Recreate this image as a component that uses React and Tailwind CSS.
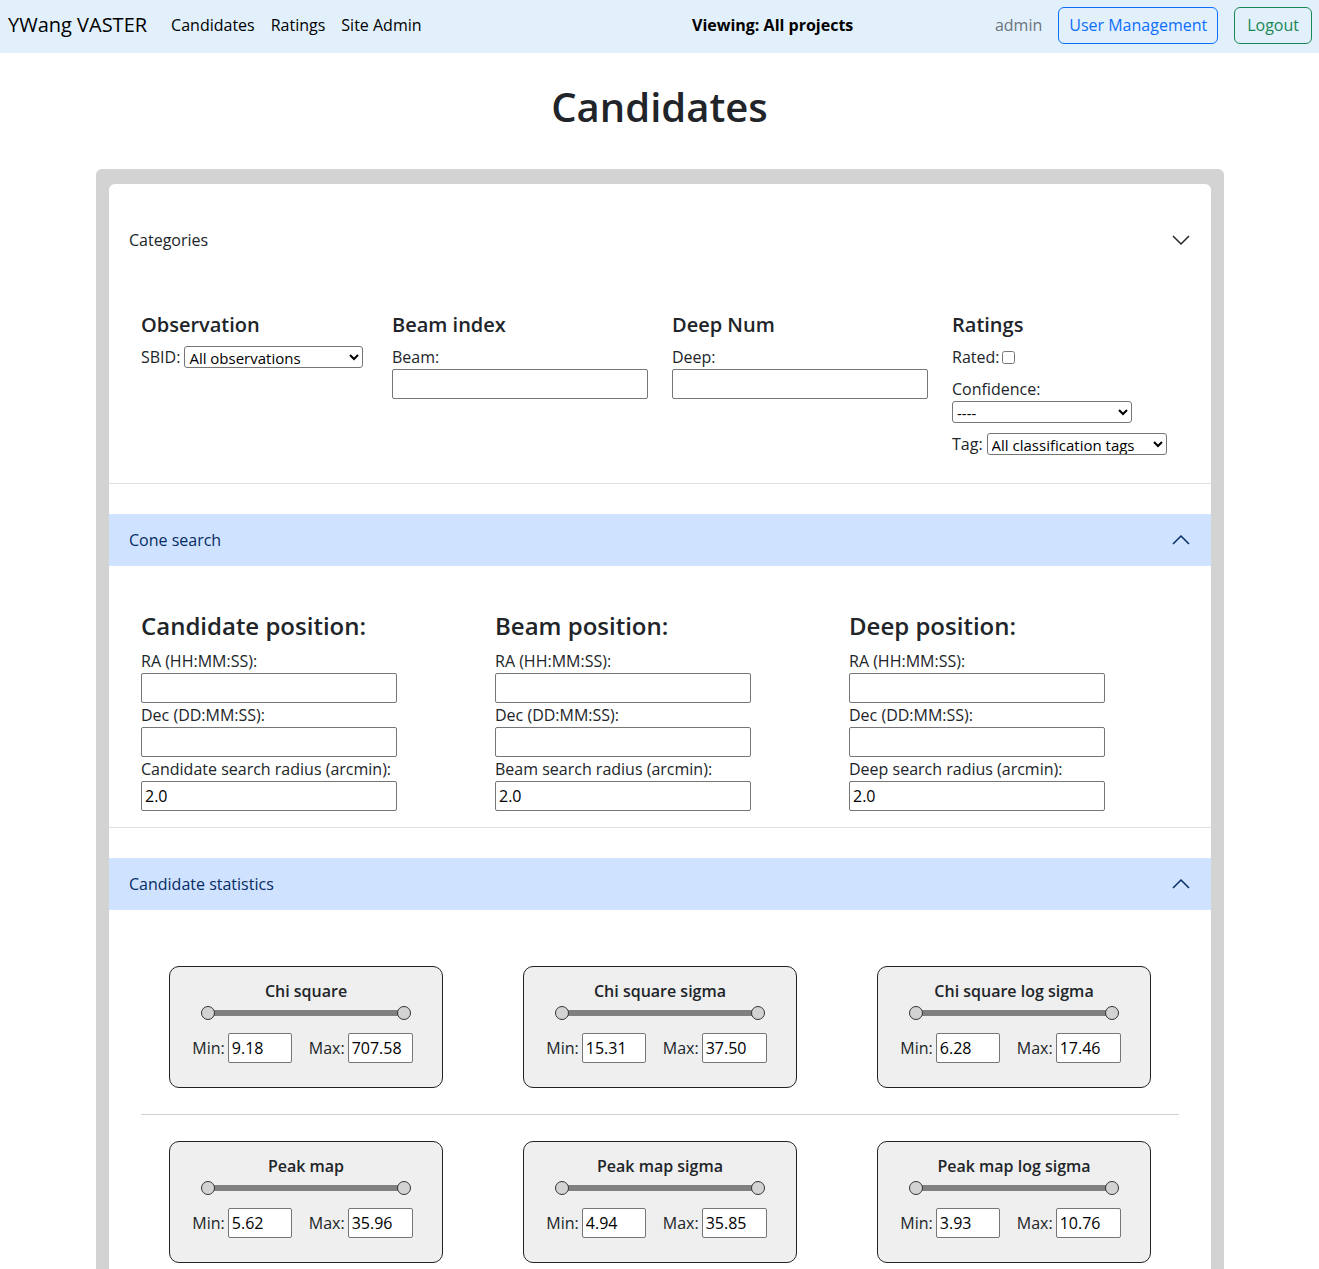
import React from 'react';

const font = { fontFamily: '"Open Sans", "Noto Sans", sans-serif' };

function Chevron({ up, className }) {
  return (
    <svg viewBox="0 0 20 20" className={className} fill="none" stroke="currentColor" strokeWidth="1.5">
      {up ? <polyline points="2,14 10,6 18,14" /> : <polyline points="2,6 10,14 18,6" />}
    </svg>
  );
}

function TextInput({ value = '', className = '' }) {
  return (
    <input
      type="text"
      defaultValue={value}
      className={`h-[30px] border border-[#767676] rounded-[2px] bg-white px-[3px] text-base text-black outline-none ${className}`}
    />
  );
}

function AccordionHeader({ title, open }) {
  return (
    <div
      className={`h-[52px] px-5 flex items-center justify-between ${
        open ? 'bg-[#cfe2ff] text-[#052c65]' : 'text-[#212529]'
      }`}
    >
      <span className="text-base">{title}</span>
      <Chevron up={open} className="w-5 h-5" />
    </div>
  );
}

function ConeColumn({ title, radiusLabel }) {
  return (
    <div className="px-3">
      <h3 className="text-2xl font-semibold leading-[29px] mb-[9px]">{title}</h3>
      <div className="leading-6">RA (HH:MM:SS):</div>
      <TextInput className="w-[256px] block" />
      <div className="leading-6">Dec (DD:MM:SS):</div>
      <TextInput className="w-[256px] block" />
      <div className="leading-6">{radiusLabel}</div>
      <TextInput value="2.0" className="w-[256px] block" />
    </div>
  );
}

function StatCard({ title, min, max }) {
  return (
    <div className="flex justify-center">
      <div className="w-[274px] h-[122px] bg-[#efefef] border border-[#222] rounded-[10px] pt-[12px] flex flex-col items-center">
        <div className="font-semibold leading-6 text-[#212529]">{title}</div>
        <div className="relative w-[210px] h-[14px] mt-[3px] flex items-center">
          <div className="absolute left-[7px] right-[7px] h-[6px] bg-[#808080]" />
          <div className="absolute left-0 w-[14px] h-[14px] rounded-full bg-[#d3d3d3] border border-[#333]" />
          <div className="absolute right-0 w-[14px] h-[14px] rounded-full bg-[#d3d3d3] border border-[#333]" />
        </div>
        <div className="flex items-center mt-[13px] ml-[-7px]">
          <span className="mr-[3px]">Min:</span>
          <TextInput value={min} className="w-[64px]" />
          <span className="ml-[17px] mr-[3px]">Max:</span>
          <TextInput value={max} className="w-[65px]" />
        </div>
      </div>
    </div>
  );
}

export default function App() {
  const selectCls = 'h-[22px] py-0 border border-[#767676] rounded-[3px] bg-white text-[15px] leading-[20px] text-black';

  return (
    <div className="min-h-screen bg-white text-[#212529]" style={font}>
      {/* Navbar */}
      <nav className="h-[53px] bg-[#e2f0fc] flex items-center pl-2 pr-[7px] pb-[3px]">
        <div className="w-[684px] flex items-center">
          <span className="text-xl text-black">YWang VASTER</span>
          <div className="flex gap-4 ml-6 text-base text-black">
            <span>Candidates</span>
            <span>Ratings</span>
            <span>Site Admin</span>
          </div>
        </div>
        <span className="font-bold text-black">Viewing: All projects</span>
        <div className="ml-auto flex items-center gap-4">
          <span className="text-[#6c757d]">admin</span>
          <button className="h-[37px] px-[10px] border border-[#0d6efd] text-[#0d6efd] rounded-md">User Management</button>
          <button className="h-[37px] px-3 border border-[#198754] text-[#198754] rounded-md">Logout</button>
        </div>
      </nav>

      <h1 className="text-[40px] font-semibold text-center leading-[48px] mt-[30px] mb-[38px]">Candidates</h1>

      {/* Filter panel */}
      <div className="ml-[96px] w-[1128px] bg-[#d3d3d3] rounded-t-md pt-[15px] px-[13px]">
        <div className="bg-white rounded-t-[6px] pt-[30px] pb-[10px]">
          {/* Categories */}
          <div className="border-b border-[#dee2e6]">
            <AccordionHeader title="Categories" open={false} />
            <div className="px-5 pt-[47px] pb-[27px] grid grid-cols-[251px_280px_280px_251px]">
              <div className="px-3">
                <h4 className="text-xl font-semibold leading-6 mb-2">Observation</h4>
                <div className="flex items-center gap-[4px]">
                  <span>SBID:</span>
                  <select className={`${selectCls} w-[179px]`}>
                    <option>All observations</option>
                  </select>
                </div>
              </div>
              <div className="px-3">
                <h4 className="text-xl font-semibold leading-6 mb-2">Beam index</h4>
                <div className="leading-6">Beam:</div>
                <TextInput className="w-[256px] block" />
              </div>
              <div className="px-3">
                <h4 className="text-xl font-semibold leading-6 mb-2">Deep Num</h4>
                <div className="leading-6">Deep:</div>
                <TextInput className="w-[256px] block" />
              </div>
              <div className="px-3">
                <h4 className="text-xl font-semibold leading-6 mb-2">Ratings</h4>
                <div className="flex items-center gap-[3px] leading-6">
                  <span>Rated:</span>
                  <input type="checkbox" className="w-[13px] h-[13px]" />
                </div>
                <div className="leading-6 mt-2">Confidence:</div>
                <select className={`${selectCls} w-[180px] block`}>
                  <option>----</option>
                </select>
                <div className="flex items-center gap-[4px] mt-[9px]">
                  <span>Tag:</span>
                  <select className={`${selectCls} w-[180px]`}>
                    <option>All classification tags</option>
                  </select>
                </div>
              </div>
            </div>
          </div>

          {/* Cone search */}
          <div className="mt-[30px] border-b border-[#dee2e6]">
            <AccordionHeader title="Cone search" open />
            <div className="px-5 pt-[45px] pb-[16px] grid grid-cols-[354px_354px_354px]">
              <ConeColumn title="Candidate position:" radiusLabel="Candidate search radius (arcmin):" />
              <ConeColumn title="Beam position:" radiusLabel="Beam search radius (arcmin):" />
              <ConeColumn title="Deep position:" radiusLabel="Deep search radius (arcmin):" />
            </div>
          </div>

          {/* Candidate statistics */}
          <div className="mt-[30px]">
            <AccordionHeader title="Candidate statistics" open />
            <div className="px-5 pt-[56px]">
              <div className="grid grid-cols-[354px_354px_354px]">
                <StatCard title="Chi square" min="9.18" max="707.58" />
                <StatCard title="Chi square sigma" min="15.31" max="37.50" />
                <StatCard title="Chi square log sigma" min="6.28" max="17.46" />
              </div>
              <div className="mx-3 my-[26px] border-t border-[#d0d0d0]" />
              <div className="grid grid-cols-[354px_354px_354px]">
                <StatCard title="Peak map" min="5.62" max="35.96" />
                <StatCard title="Peak map sigma" min="4.94" max="35.85" />
                <StatCard title="Peak map log sigma" min="3.93" max="10.76" />
              </div>
            </div>
          </div>
        </div>
      </div>
    </div>
  );
}
